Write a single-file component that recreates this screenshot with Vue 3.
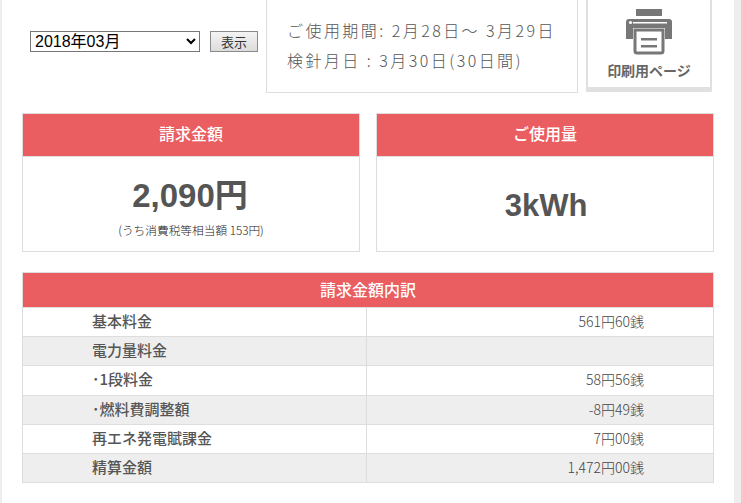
<template>
  <div class="page">
    <div class="top">
      <form class="month-form" @submit.prevent>
        <select v-model="month" class="month-select">
          <option v-for="m in months" :key="m" :value="m">{{ m }}</option>
        </select>
        <button type="submit" class="show-btn">表示</button>
      </form>
      <div class="period">
        <p>ご使用期間: 2月28日～ 3月29日</p>
        <p>検針月日 : 3月30日(30日間)</p>
      </div>
      <a class="print-btn" href="#">
        <svg width="48" height="46" viewBox="0 0 48 46">
          <rect x="11" y="0" width="26" height="7" fill="#777" />
          <path d="M4 10h40a3 3 0 0 1 3 3v17h-7V19H8v11H1V13a3 3 0 0 1 3-3z" fill="#777" />
          <rect x="8" y="13" width="34" height="1.5" fill="#fff" />
          <circle cx="5.5" cy="13.5" r="1.6" fill="#fff" />
          <path d="M10 21h28v21a2 2 0 0 1-2 2H12a2 2 0 0 1-2-2z" fill="#fff" stroke="#777" stroke-width="3" />
          <rect x="16" y="29" width="16" height="2.5" fill="#777" />
          <rect x="16" y="36" width="16" height="2.5" fill="#777" />
        </svg>
        <span>印刷用ページ</span>
      </a>
    </div>

    <div class="cards">
      <section class="card">
        <h2>請求金額</h2>
        <div class="card-body">
          <strong class="amount">2,090円</strong>
          <small>(うち消費税等相当額 153円)</small>
        </div>
      </section>
      <section class="card">
        <h2>ご使用量</h2>
        <div class="card-body">
          <strong class="usage">3kWh</strong>
        </div>
      </section>
    </div>

    <table class="detail">
      <colgroup>
        <col class="col-label" />
        <col />
      </colgroup>
      <thead>
        <tr><th colspan="2">請求金額内訳</th></tr>
      </thead>
      <tbody>
        <tr v-for="row in rows" :key="row.label">
          <td class="label">{{ row.label }}</td>
          <td class="value">{{ row.value }}</td>
        </tr>
      </tbody>
    </table>
  </div>
</template>

<script setup>
import { ref } from 'vue'

const months = ['2018年03月', '2018年02月', '2018年01月']
const month = ref('2018年03月')

const rows = [
  { label: '基本料金', value: '561円60銭' },
  { label: '電力量料金', value: '' },
  { label: '･1段料金', value: '58円56銭' },
  { label: '･燃料費調整額', value: '-8円49銭' },
  { label: '再エネ発電賦課金', value: '7円00銭' },
  { label: '精算金額', value: '1,472円00銭' }
]
</script>

<style>
html, body {
  margin: 0;
  background: #eeeeee;
}
</style>

<style scoped>
.page {
  width: 732px;
  height: 503px;
  margin-left: 2px;
  padding: 0 20px;
  box-sizing: border-box;
  background: #fff;
  overflow: hidden;
  font-family: "Noto Sans CJK JP", "Liberation Sans", sans-serif;
  color: #555;
}

.top {
  display: flex;
  height: 92px;
  margin-bottom: 21px;
}

.month-form {
  display: flex;
  align-items: flex-start;
  gap: 10px;
  width: 244px;
  padding: 31px 0 0 8px;
  box-sizing: border-box;
}

.month-select {
  width: 170px;
  height: 21px;
  padding: 0;
  border: 1px solid #767676;
  background: #fff;
  color: #000;
  font-family: "Liberation Sans", "Noto Sans CJK JP", sans-serif;
  font-size: 16px;
}

.show-btn {
  width: 48px;
  height: 21px;
  padding: 0;
  border: 1px solid #8a8a8a;
  background: linear-gradient(#f4f4f4, #dcdcdc);
  color: #333;
  font-family: "Noto Sans CJK JP", sans-serif;
  font-size: 13px;
  line-height: 19px;
}

.period {
  width: 312px;
  height: 93px;
  padding: 15px 0 0 20px;
  box-sizing: border-box;
  border: 1px solid #dddddd;
  border-top: 0;
  font-size: 16px;
  font-weight: 300;
  letter-spacing: 2.45px;
  color: #555;
}

.period p {
  margin: 0;
  height: 30px;
  line-height: 30px;
  white-space: nowrap;
}

.print-btn {
  display: flex;
  flex-direction: column;
  align-items: center;
  width: 126px;
  height: 92px;
  margin-left: 8px;
  padding-top: 9px;
  box-sizing: border-box;
  border: solid #e0e0e0;
  border-width: 0 2px 5px;
  border-radius: 0 0 2px 2px;
  text-decoration: none;
  color: #666;
}

.print-btn span {
  margin-top: 6px;
  font-size: 14px;
  font-weight: 700;
  line-height: 18px;
}

.cards {
  display: flex;
  gap: 16px;
  margin-bottom: 20px;
}

.card {
  width: 338px;
  height: 139px;
  box-sizing: border-box;
  border: 1px solid #dddddd;
}

.card h2 {
  margin: 0;
  height: 43px;
  line-height: 39px;
  border-bottom: 1px solid #dddddd;
  box-sizing: border-box;
  background: #ea5d60;
  color: #fff;
  font-size: 16px;
  font-weight: 500;
  text-align: center;
}

.card-body {
  display: flex;
  flex-direction: column;
  align-items: center;
  height: 94px;
}

.amount {
  margin-top: 17px;
  margin-right: 2px;
  font-family: "Liberation Sans", "Noto Sans CJK JP", sans-serif;
  font-size: 33px;
  font-weight: 700;
  line-height: 44px;
  color: #555;
}

.usage {
  margin-top: 27px;
  margin-left: 2px;
  font-family: "Liberation Sans", "Noto Sans CJK JP", sans-serif;
  font-size: 31px;
  font-weight: 700;
  line-height: 44px;
  color: #555;
}

.card small {
  margin-top: 4px;
  font-size: 11.7px;
  font-weight: 300;
  line-height: 16px;
  color: #222;
}

.detail {
  width: 692px;
  border-collapse: collapse;
  table-layout: fixed;
  font-size: 14px;
}

.col-label {
  width: 344px;
}

.detail th {
  height: 35px;
  padding: 0 0 3px;
  box-sizing: border-box;
  border: 1px solid #dddddd;
  background: #ea5d60;
  color: #fff;
  font-size: 16px;
  font-weight: 500;
}

.detail td {
  height: 29px;
  padding: 0 0 3px;
  box-sizing: border-box;
  border: 1px solid #dddddd;
  line-height: 20px;
}

.detail tbody tr:nth-child(3) td {
  height: 30px;
}

.detail tbody tr:nth-child(even) td {
  background: #eeeeee;
}

.label {
  padding-left: 69px !important;
  font-size: 15px;
  font-weight: 500;
  color: #555;
}

.value {
  padding-right: 69px !important;
  text-align: right;
  color: #444;
  font-weight: 300;
}
</style>
